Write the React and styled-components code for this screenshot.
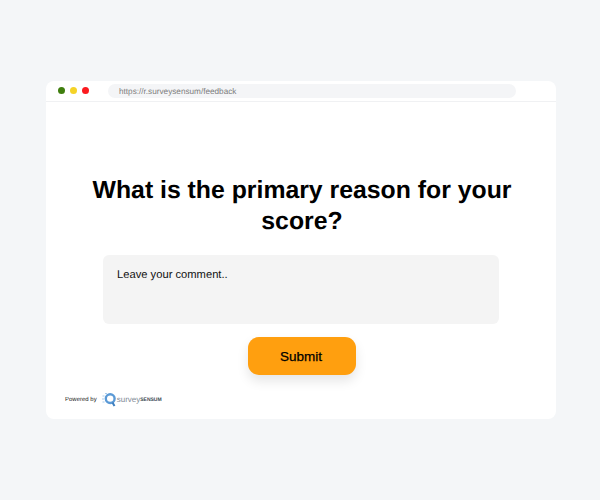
import React from 'react';
import styled, { createGlobalStyle } from 'styled-components';

const GlobalStyle = createGlobalStyle`
  html, body {
    margin: 0;
    padding: 0;
    background: #f4f6f8;
  }
  * {
    box-sizing: border-box;
  }
`;

const Logo = () => (
  <svg width="15" height="15" viewBox="0 0 15 15">
    <circle cx="8.2" cy="6.6" r="4.4" fill="none" stroke="#5b9ad6" strokeWidth="2.4" />
    <path d="M10.5 10.5l2 3.6" stroke="#3f7fbe" strokeWidth="2" fill="none" />
    <path d="M0.5 4h2M0 7h2M0.5 10h2M3 1.5h2" stroke="#a9cbec" strokeWidth="1.2" fill="none" />
  </svg>
);

const App = () => {
  return (
    <>
      <GlobalStyle />
      <Page>
        <BrowserWindow>
          <TopBar>
            <Dots>
              <Dot color="#3f7e0e" />
              <Dot color="#f5d327" />
              <Dot color="#fb1a1f" />
            </Dots>
            <AddressBar>https://r.surveysensum/feedback</AddressBar>
          </TopBar>
          <Content>
            <Question>What is the primary reason for your score?</Question>
            <CommentBox>Leave your comment..</CommentBox>
            <SubmitButton>Submit</SubmitButton>
          </Content>
          <Footer>
            <PoweredBy>Powered by</PoweredBy>
            <Brand>
              <Logo />
              <BrandLight>survey</BrandLight>
              <BrandBold>SENSUM</BrandBold>
            </Brand>
          </Footer>
        </BrowserWindow>
      </Page>
    </>
  );
};

export default App;

const Page = styled.div`
  width: 600px;
  height: 500px;
  padding: 81px 44px 81px 46px;
  overflow: hidden;
  font-family: "Liberation Sans", Arial, sans-serif;
  text-rendering: geometricPrecision;
`;

const BrowserWindow = styled.div`
  width: 510px;
  height: 338px;
  background: #ffffff;
  border-radius: 8px;
  display: flex;
  flex-direction: column;
`;

const TopBar = styled.div`
  height: 21px;
  display: flex;
  align-items: center;
  padding: 0 40px 0 12px;
  border-bottom: 1px solid #f0f1f3;
`;

const Dots = styled.div`
  display: flex;
  gap: 5px;
  margin: 0 19px 1px 0;
`;

const Dot = styled.span`
  width: 7px;
  height: 7px;
  border-radius: 50%;
  background: ${(props) => props.color};
`;

const AddressBar = styled.div`
  flex: 1;
  height: 14px;
  line-height: 15px;
  border-radius: 7px;
  background: #f4f5f7;
  padding-left: 11px;
  font-size: 8.2px;
  color: #7d7d7d;
`;

const Content = styled.div`
  flex: 1;
  display: flex;
  flex-direction: column;
  align-items: center;
  padding-top: 73px;
  margin-left: 2px;
`;

const Question = styled.h1`
  width: 440px;
  margin: 0;
  font-size: 24.8px;
  line-height: 31px;
  font-weight: 700;
  text-align: center;
  color: #000000;
`;

const CommentBox = styled.div`
  width: 396px;
  height: 69px;
  margin: 18px 2px 0 0;
  padding: 13px 14px;
  border-radius: 6px;
  background: #f4f4f4;
  font-size: 11.2px;
  line-height: 14px;
  color: #111111;
`;

const SubmitButton = styled.button`
  width: 108px;
  height: 38px;
  margin-top: 13px;
  padding: 0 8px 0 6px;
  border: none;
  border-radius: 11px;
  background: #ff9f0f;
  box-shadow: 0 6px 12px rgba(0, 0, 0, 0.1);
  font-family: inherit;
  font-size: 13.5px;
  -webkit-text-stroke: 0.25px #000000;
  color: #000000;
`;

const Footer = styled.div`
  display: flex;
  align-items: center;
  gap: 5px;
  padding: 1px 0 12px 19px;
`;

const PoweredBy = styled.span`
  font-size: 6px;
  color: #222222;
`;

const Brand = styled.div`
  display: flex;
  align-items: center;
`;

const BrandLight = styled.span`
  font-size: 8px;
  color: #7f8b96;
`;

const BrandBold = styled.span`
  font-size: 5px;
  font-weight: 700;
  color: #3a4550;
`;
